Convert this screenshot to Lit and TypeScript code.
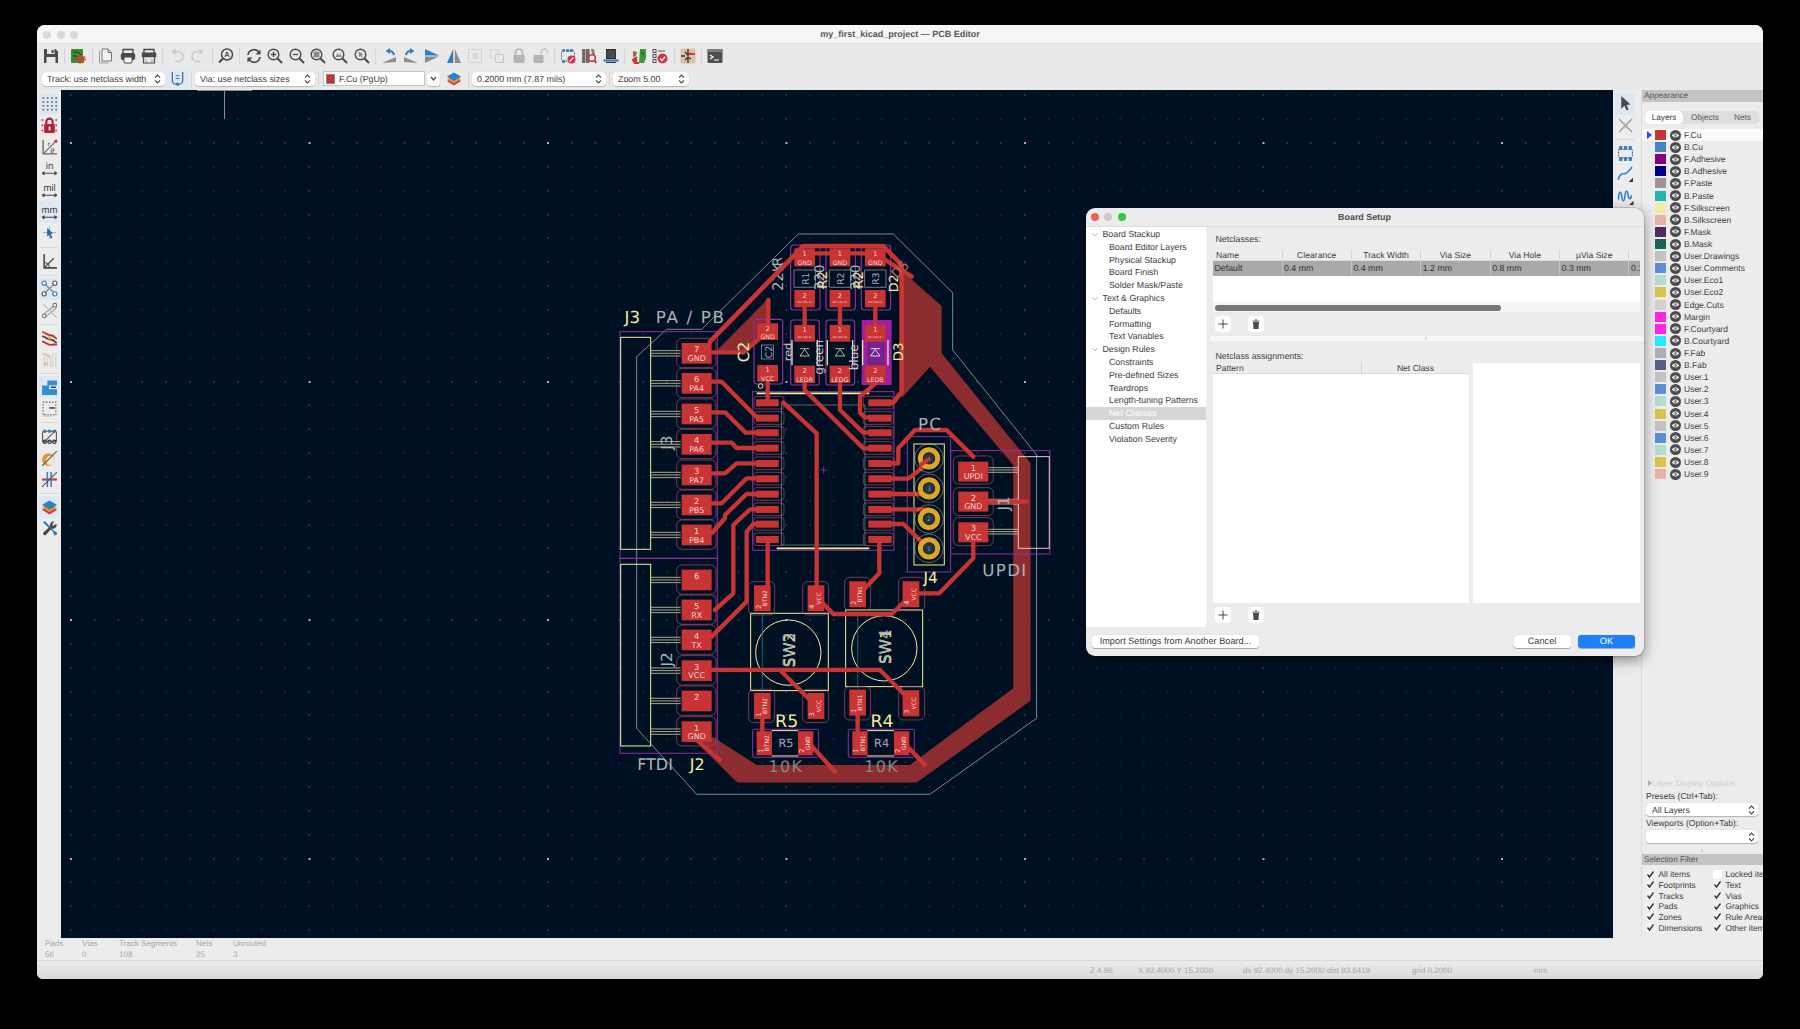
import { css, html, LitElement, svg, nothing, type TemplateResult } from 'lit';
import { customElement } from 'lit/decorators.js';

const INK = '#4a4a4a';
const OFF = '#c9c9c9';
const BLUE = '#2f7fc1';

// 16x16 toolbar glyphs, roughly in KiCad's own colours
const ICONS: Record<string, TemplateResult> = {
  save: svg`<path d="M1 1h11.5L15 3.5V15H1z" fill=${INK}/><rect x="4" y="1" width="7.5" height="5" fill="#e9e9e9"/><rect x="8.6" y="2" width="2" height="3" fill=${INK}/><rect x="3.5" y="9" width="9" height="6" fill="#e9e9e9"/>`,
  setup: svg`<rect x="1" y="1" width="12" height="14" rx="1" fill="#3a8c35"/><path d="M3 4h5l3 3M3 8h3l3 4" stroke="#173f18" fill="none"/><circle cx="11" cy="11" r="2.6" fill="none" stroke="#d6402f" stroke-width="2"/><circle cx="11" cy="11" r="4.2" fill="none" stroke="#d6402f" stroke-width="1.2" stroke-dasharray="1.6 1.7"/>`,
  page: svg`<path d="M1.5 3v12h9" fill="none" stroke="#9a9a9a"/><path d="M4 1h6l3.5 3.5V13H4z" fill="#f2f2f2" stroke="#777"/><path d="M10 1v3.5h3.5" fill="none" stroke="#777"/>`,
  print: svg`<path d="M3 6V1.5h10V6" fill="none" stroke=${INK} stroke-width="1.4"/><rect x="0.8" y="5" width="14.4" height="7" rx="2" fill=${INK}/><rect x="4" y="9" width="8" height="6" rx="1" fill="#f4f4f4" stroke=${INK}/>`,
  plot: svg`<path d="M3 6V1.5h10V6" fill="none" stroke=${INK} stroke-width="1.4"/><rect x="0.8" y="4.5" width="14.4" height="5" fill=${INK}/><path d="M2.5 9.5V15h11V9.5" fill="#e9e9e9" stroke=${INK} stroke-width="1.2"/><path d="M5 11v4M11 11v4" stroke="#999"/>`,
  undo: svg`<path d="M4 3.5h5a4.5 4.5 0 0 1 0 10H6" fill="none" stroke=${OFF} stroke-width="1.6"/><path d="M6.5 1L3.5 3.5 6.5 6" fill="none" stroke=${OFF} stroke-width="1.6"/>`,
  redo: svg`<path d="M12 3.5H7a4.5 4.5 0 0 0 0 10h3" fill="none" stroke=${OFF} stroke-width="1.6"/><path d="M9.5 1l3 2.5-3 2.5" fill="none" stroke=${OFF} stroke-width="1.6"/>`,
  find: svg`<circle cx="9" cy="6.5" r="5.5" fill="none" stroke=${INK} stroke-width="1.5"/><path d="M5 10.5l-4 4" stroke=${INK} stroke-width="2.2"/><text x="9" y="9.2" font-size="7.5" font-weight="700" text-anchor="middle" fill=${INK} font-family="Liberation Sans">A</text>`,
  refresh: svg`<path d="M2 7a6 6 0 0 1 10.5-3.2L14 5.5" fill="none" stroke=${INK} stroke-width="1.7"/><path d="M14.5 1.5v5h-5z" fill=${INK}/><path d="M14 9a6 6 0 0 1-10.5 3.2L2 10.5" fill="none" stroke=${INK} stroke-width="1.7"/><path d="M1.5 14.5v-5h5z" fill=${INK}/>`,
  zin: svg`<circle cx="6.5" cy="6.5" r="5.3" fill="none" stroke=${INK} stroke-width="1.4"/><path d="M10.5 10.5l4.5 4.5" stroke=${INK} stroke-width="2"/><path d="M3.8 6.5h5.4M6.5 3.8v5.4" stroke=${INK} stroke-width="1.3"/>`,
  zout: svg`<circle cx="6.5" cy="6.5" r="5.3" fill="none" stroke=${INK} stroke-width="1.4"/><path d="M10.5 10.5l4.5 4.5" stroke=${INK} stroke-width="2"/><path d="M3.8 6.5h5.4" stroke=${INK} stroke-width="1.3"/>`,
  zfit: svg`<circle cx="6.5" cy="6.5" r="5.3" fill="none" stroke=${INK} stroke-width="1.4"/><path d="M10.5 10.5l4.5 4.5" stroke=${INK} stroke-width="2"/><rect x="3.6" y="3.6" width="5.8" height="5.8" fill="#8a8a8a"/>`,
  zobj: svg`<circle cx="6.5" cy="6.5" r="5.3" fill="none" stroke=${INK} stroke-width="1.4"/><path d="M10.5 10.5l4.5 4.5" stroke=${INK} stroke-width="2"/><path d="M3.5 9l2-4 1.5 2.5L8.5 5l1 4z" fill="#8a8a8a"/>`,
  zsel: svg`<circle cx="6.5" cy="6.5" r="5.3" fill="none" stroke=${INK} stroke-width="1.4"/><path d="M10.5 10.5l4.5 4.5" stroke=${INK} stroke-width="2"/><path d="M4.5 3.5l5 3-2 .8 1 2-1 .5-1-2-1.5 1.2z" fill="#8a8a8a"/>`,
  rccw: svg`<path d="M1 15l14-1V9z" fill="#8c8c8c"/><path d="M13 7a5 5 0 0 0-5-4" fill="none" stroke=${BLUE} stroke-width="2.2"/><path d="M9 0v6L4.5 3z" fill=${BLUE}/>`,
  rcw: svg`<path d="M15 15L1 14V9z" fill="#8c8c8c"/><path d="M3 7a5 5 0 0 1 5-4" fill="none" stroke=${BLUE} stroke-width="2.2"/><path d="M7 0v6l4.5-3z" fill=${BLUE}/>`,
  flip: svg`<path d="M1 8.5h14L1 15z" fill="#8c8c8c"/><path d="M1 1l14 6.5H1z" fill=${BLUE}/>`,
  mirror: svg`<path d="M7.2 1v14H1z" fill=${BLUE}/><path d="M8.8 1v14H15z" fill="#8c8c8c"/>`,
  group: svg`<rect x="1.5" y="1.5" width="13" height="13" fill="none" stroke=${OFF} stroke-dasharray="2 1"/><rect x="5" y="5" width="6" height="6" fill="#d9d9d9"/>`,
  ungroup: svg`<rect x="1.5" y="1.5" width="8" height="8" fill="none" stroke=${OFF} stroke-dasharray="2 1"/><rect x="6.5" y="6.5" width="8" height="8" fill="#e6e6e6" stroke=${OFF}/>`,
  lock: svg`<path d="M4.5 7V4.5a3.5 3.5 0 0 1 7 0V7" fill="none" stroke="#b4b4b4" stroke-width="1.7"/><rect x="2.5" y="7" width="11" height="8" rx="1" fill="#b4b4b4"/>`,
  unlock: svg`<path d="M9.5 7V4a3 3 0 0 1 6 0v1" fill="none" stroke="#c4c4c4" stroke-width="1.4"/><rect x="1.5" y="7" width="10" height="8" rx="1" fill="#b4b4b4"/>`,
  inspect: svg`<rect x="1.5" y="3" width="13" height="10" rx="1.5" fill="none" stroke="#666" stroke-dasharray="2 1"/><path d="M2 2.5h3M6 2.5h3M10 2.5h3M2 13.5h3" stroke=${BLUE} stroke-width="2.4"/><circle cx="11.5" cy="11.5" r="4" fill="#d6304a"/><path d="M9.5 13.5l4-4" stroke="#fff" stroke-width="1.3"/>`,
  lib: svg`<rect x="1" y="1" width="3.5" height="14" fill="#7a6a6a"/><rect x="5" y="1" width="3.5" height="14" fill="#6a6a6a"/><path d="M10 1h3l1 6-2.5 1z" fill="#8a7a7a"/><circle cx="11" cy="10" r="3.3" fill="#fff" stroke="#d6304a" stroke-width="1.6"/><path d="M13.2 12.4l2.2 2.4" stroke="#d6304a" stroke-width="2"/>`,
  view3d: svg`<rect x="3" y="1" width="10" height="10" fill="#2e2e2e"/><path d="M4 2h8v8H4z" fill="#4a4a4a"/><path d="M0.5 12.5h15" stroke=${BLUE} stroke-width="2.2"/><path d="M3 14.5h10" stroke="#333"/>`,
  route: svg`<path d="M9 1h6v9l-2 5H8z" fill="#3a9a3a"/><path d="M10 4l3 3" stroke="#163f16"/><path d="M2 3l4 1-1 4-3 1z" fill="#9a6a4a"/><path d="M6 9l-4 3 2 3h4" fill="none" stroke="#c83434" stroke-width="2"/><circle cx="4" cy="12" r="2.4" fill="#c83434"/>`,
  drc: svg`<rect x="1" y="1.5" width="3" height="3" fill="none" stroke="#555"/><rect x="1" y="6.5" width="3" height="3" fill="none" stroke="#555"/><rect x="1" y="11.5" width="3" height="3" fill="none" stroke="#555"/><path d="M6 3h7" stroke="#555"/><circle cx="10.5" cy="10.5" r="5" fill="#d6304a"/><path d="M8 10.5l2 2 3.2-3.8" fill="none" stroke="#fff" stroke-width="1.5"/>`,
  sch: svg`<rect x="0.5" y="0.5" width="15" height="15" rx="1" fill="#d9c3a8"/><path d="M8 1v5M8 10v5M1 8h4" stroke="#333" stroke-width="1.4"/><path d="M5 4l3 3.5L11 5M5 12l3-3 3 2" fill="none" stroke="#333" stroke-width="1.2"/><path d="M8 6h7" stroke="#c83434" stroke-width="1.8"/>`,
  term: svg`<rect x="0.5" y="1" width="15" height="14" rx="1" fill="#4e4e4e"/><rect x="0.5" y="1" width="15" height="3" fill="#7c7c7c"/><path d="M3 7l3 2-3 2" fill="none" stroke="#fff" stroke-width="1.2"/><path d="M7 12h5" stroke="#fff"/>`,

  grid: svg`<g fill="#6b6f78">${[2, 5.7, 9.4, 13].flatMap((y) => [1.5, 5.5, 9.5, 13.5].map((x) => svg`<rect x=${x} y=${y} width="1.6" height="1.6"/>`))}</g>`,
  gridlock: svg`<g fill="#d6304a"><rect x="0.5" y="2" width="1.6" height="1.6"/><rect x="13.5" y="2" width="1.6" height="1.6"/><rect x="0.5" y="7" width="1.6" height="1.6"/><rect x="13.5" y="7" width="1.6" height="1.6"/><rect x="0.5" y="12" width="1.6" height="1.6"/><rect x="13.5" y="12" width="1.6" height="1.6"/></g><path d="M5 7V4.5a3 3 0 0 1 6 0V7" fill="none" stroke="#b81f3a" stroke-width="2"/><rect x="3" y="6.5" width="10" height="8.5" rx="1" fill="#b81f3a"/><rect x="7.2" y="9" width="1.6" height="3.5" fill="#fff"/>`,
  polar: svg`<path d="M2 1v13h13" fill="none" stroke="#666" stroke-width="1.3"/><path d="M2 14L14 2" stroke="#666"/><circle cx="14" cy="2" r="1.5" fill="#d6304a"/><text x="6" y="6.5" font-size="6.5" font-style="italic" fill="#333" font-family="Liberation Serif">r</text><text x="9" y="13" font-size="7" font-style="italic" fill="#333" font-family="Liberation Serif">θ</text>`,
  uin: svg`<text x="8" y="8.5" font-size="9" text-anchor="middle" fill="#444" font-family="Liberation Sans">in</text><path d="M1 12.5h14M1 12.5l2.5-1.5M1 12.5l2.5 1.5M15 12.5l-2.5-1.5M15 12.5l-2.5 1.5" stroke="#444" fill="none"/>`,
  umil: svg`<text x="8" y="8.5" font-size="9" text-anchor="middle" fill="#444" font-family="Liberation Sans">mil</text><path d="M1 12.5h14M1 12.5l2.5-1.5M1 12.5l2.5 1.5M15 12.5l-2.5-1.5M15 12.5l-2.5 1.5" stroke="#444" fill="none"/>`,
  umm: svg`<text x="8" y="8.5" font-size="9" text-anchor="middle" fill="#444" font-family="Liberation Sans">mm</text><path d="M1 12.5h14M1 12.5l2.5-1.5M1 12.5l2.5 1.5M15 12.5l-2.5-1.5M15 12.5l-2.5 1.5" stroke="#444" fill="none"/>`,
  fullcross: svg`<path d="M8 1v12M2 7h12" stroke="#8fb7d2"/><path d="M6 3l5 5-2 .5 1.8 3.5-1.5.8L7.5 9 6 10.5z" fill="#3a5a86"/><path d="M6 3l5 5-2 .5-3 2z" fill="#1d70b8"/>`,
  axes: svg`<path d="M3 1v13h12" fill="none" stroke=${INK} stroke-width="1.5"/><path d="M3 14l9-9" stroke=${INK} stroke-width="1.3"/><path d="M3 9a5 5 0 0 1 5 5" fill="none" stroke=${INK}/>`,
  rats: svg`<path d="M2.5 3l11 10M13.5 3l-11 10" stroke="#8b8b8b" stroke-width="1.2"/><circle cx="3" cy="3" r="2" fill="#fff" stroke="#3a7ca8"/><circle cx="13" cy="3" r="2" fill="#fff" stroke="#555"/><circle cx="3" cy="13" r="2" fill="#fff" stroke="#555"/><circle cx="13" cy="13" r="2" fill="#fff" stroke="#3a7ca8"/>`,
  ratsc: svg`<path d="M2 14C3 8 9 9 13 2" fill="none" stroke="#999" stroke-width="1.2"/><path d="M4 15C7 9 12 11 15 4" fill="none" stroke="#999"/><circle cx="3" cy="13" r="1.7" fill="#fff" stroke="#777"/><circle cx="13" cy="3" r="1.7" fill="#fff" stroke="#777"/><path d="M2 2l13 13" stroke="#bbb"/>`,
  tracks: svg`<path d="M1 2c4 0 4 3 8 3s4 3 6 3" fill="none" stroke="#c2342f" stroke-width="1.8"/><path d="M1 6c4 0 4 3 8 3s4 3 6 3" fill="none" stroke="#5a3d35" stroke-width="1.6"/><path d="M1 11c4 0 4 3 8 3s4-1 6 0" fill="none" stroke="#c2342f" stroke-width="1.8"/><circle cx="8" cy="7.5" r="1.6" fill="#e2a93a"/>`,
  gold: svg`<path d="M3 15V7a3 3 0 0 1 6 0v8M6 15V6M11 15V2M14 15V2" fill="none" stroke="#d4d4d4" stroke-width="1.3"/><path d="M1 3c3-1 5 0 7 3" fill="none" stroke="#e3b977" stroke-width="1.3"/><circle cx="4" cy="12" r="1.2" fill="#e2a93a"/>`,
  fill: svg`<path d="M1 15V6h5V1.5h9V15z" fill="#2f8fd0"/><rect x="7.5" y="6" width="7.5" height="3.5" fill="#e9f0f6"/><path d="M9 7.7h5" stroke="#333" stroke-width="1.4"/>`,
  outline: svg`<rect x="2" y="2" width="12" height="12" fill="none" stroke="#666" stroke-dasharray="1.4 1.4"/><path d="M8 7.5h5" stroke="#333" stroke-width="1.4"/><path d="M2 15h8" stroke="#e3b977" stroke-width="1.2"/>`,
  vias: svg`<rect x="1.5" y="3" width="13" height="10" rx="1" fill="none" stroke="#555"/><g fill=${BLUE}><circle cx="3.5" cy="3" r="1.6"/><circle cx="8" cy="3" r="1.6"/><circle cx="12.5" cy="3" r="1.6"/></g><path d="M2 14L14 2" stroke="#555"/><g fill="none" stroke="#333"><circle cx="3.5" cy="13" r="1.6"/><circle cx="8" cy="13" r="1.6"/><circle cx="12.5" cy="13" r="1.6"/></g>`,
  orange: svg`<circle cx="7" cy="9" r="6" fill="#e8962c"/><circle cx="9" cy="10" r="4" fill="#e9e9e9" stroke="#ddd"/><path d="M1 15L15 1" stroke="#555"/>`,
  redblue: svg`<path d="M1 8h14" stroke="#d6304a" stroke-width="2"/><path d="M6 1v14M9.5 1v14" stroke="#2f7fc1" stroke-width="1.4"/><path d="M1 15L15 1" stroke="#555"/>`,
  layers: svg`<path d="M8 6l7 4-7 4.5L1 10z" fill="#d6304a"/><path d="M8 4l7 4-7 4.5L1 8z" fill="#e39a2e"/><path d="M8 1.5l7 4L8 10 1 5.5z" fill="#2f7fc1"/>`,
  tools: svg`<path d="M2 2l1.5-1 9 9.5 1.8.5 1 2.5-2.5 1-1-2-.3-1.2z" fill="#1d70b8"/><path d="M14.5 3.5l-3 2-1-1 2-3a3.5 3.5 0 0 0-4 4.5L2 12a2 2 0 0 0 2 2.5L10 8a3.5 3.5 0 0 0 4.5-4.5z" fill=${INK}/>`,

  arrow: svg`<path d="M4 1v12l3-2.8 2 4.4 2-.9-2-4.3 3.8-.4z" fill="#4a4a4a"/>`,
  cross: svg`<path d="M2 2l12 12M14 2L2 14" stroke="#8c8c8c" stroke-width="1.1"/><path d="M6 6l4 4M10 6l-4 4" stroke="#bbb" stroke-width="3" opacity=".5"/>`,
  fp: svg`<rect x="1.5" y="4" width="13" height="8" rx="1.5" fill="none" stroke="#555" stroke-dasharray="1.6 1"/><g fill=${BLUE}><rect x="2" y="1" width="3" height="3.5"/><rect x="6.5" y="1" width="3" height="3.5"/><rect x="11" y="1" width="3" height="3.5"/><rect x="2" y="11.5" width="3" height="3.5"/><rect x="6.5" y="11.5" width="3" height="3.5"/><rect x="11" y="11.5" width="3" height="3.5"/></g>`,
  wire: svg`<path d="M1 13c2-7 4-5 7-6s4-3 6-6" fill="none" stroke=${BLUE} stroke-width="1.5"/><path d="M15 15v-4l-4 4z" fill="#333"/>`,
  wave: svg`<path d="M1 11c1 0 0-7 2-7s1 8 3 8 1-9 3-9 1 7 3 7 1-3 2-3" fill="none" stroke=${BLUE} stroke-width="1.5"/><path d="M15.5 16v-4l-4 4z" fill="#333"/>`,
};

const TOP = 'save|setup|page print plot|undo redo|find|refresh zin zout zfit zobj zsel|rccw rcw flip mirror group ungroup lock unlock|inspect lib view3d|route drc|sch|term';
const LEFT = 'grid* gridlock polar uin umil umm* fullcross|axes|rats* ratsc|tracks gold|fill* outline|vias orange redblue|layers* tools';
const RIGHT = 'arrow* cross|fp wire wave';

function toolStrip(spec: string) {
  return spec.split('|').map((chunk, i) => html`
    ${i ? html`<i class="sep"></i>` : nothing}
    ${chunk.split(' ').map((raw) => {
      const name = raw.replace('*', '');
      return html`<span class="tool ${raw.endsWith('*') ? 'on' : ''}"><svg viewBox="0 0 16 16">${ICONS[name]}</svg></span>`;
    })}
  `);
}

const updown = html`<svg class="updown" viewBox="0 0 7 10"><path d="M1 3.6L3.5 1 6 3.6M1 6.4L3.5 9 6 6.4" fill="none" stroke="#444" stroke-width="1.1"/></svg>`;

const chromeStyles = css`
  .tool { flex: none; display: flex; align-items: center; justify-content: center; border-radius: 2px; }
  .tool.on { background: #dde8f2; }
  .tool svg { width: 16px; height: 16px; display: block; }
  .updown { width: 7px; height: 10px; flex: none; }
`;

const LAYERS: [string, string, boolean?][] = [
  ['F.Cu', '#c83434'], ['B.Cu', '#4d7fc4'], ['F.Adhesive', '#84007f'], ['B.Adhesive', '#00008a'],
  ['F.Paste', '#a39494'], ['B.Paste', '#21b5ac'], ['F.Silkscreen', '#f2eda1'], ['B.Silkscreen', '#e8b2a7'],
  ['F.Mask', '#5a2d6e', true], ['B.Mask', '#1a6f62', true], ['User.Drawings', '#c2c2c2'], ['User.Comments', '#5b8fd9'],
  ['User.Eco1', '#b4dbd2'], ['User.Eco2', '#d6c54c'], ['Edge.Cuts', '#d0d2cb'], ['Margin', '#ff26e2'],
  ['F.Courtyard', '#ff26e2'], ['B.Courtyard', '#26e9ff'], ['F.Fab', '#afafaf'], ['B.Fab', '#585d84'],
  ['User.1', '#c2c2c2'], ['User.2', '#5b8fd9'], ['User.3', '#b4dbd2'], ['User.4', '#d6c54c'],
  ['User.5', '#c2c2c2'], ['User.6', '#5b8fd9'], ['User.7', '#b4dbd2'], ['User.8', '#dcc24a'], ['User.9', '#e8b2a7'],
];

const FILTERS: [string, boolean][] = [
  ['All items', true], ['Locked items', false], ['Footprints', true], ['Text', true], ['Tracks', true], ['Vias', true],
  ['Pads', true], ['Graphics', true], ['Zones', true], ['Rule Areas', true], ['Dimensions', true], ['Other items', true],
];

@customElement('appearance-panel')
export class AppearancePanel extends LitElement {
  static override styles = [chromeStyles, css`
    :host { display: flex; flex-direction: column; width: 122px; flex: none; background: #ececec; overflow: hidden;
      font: 8.6px "Liberation Sans", sans-serif; color: #3c3c3c; border-left: 1px solid #dcdcdc; box-sizing: border-box; }
    .head { height: 12px; line-height: 12px; background: #c4c4c4; font-size: 8.2px; padding-left: 2px; color: #555; flex: none; }
    .filt { height: 11px; line-height: 11px; }
    .tabs { display: flex; margin: 9px 3px 5px 3px; height: 13px; background: #dedede; border-radius: 5px; align-items: center; color: #555; flex: none; }
    .tabs span { text-align: center; font-size: 8.2px; line-height: 13px; }
    .tabs .active { width: 38px; background: #fff; border-radius: 5px; color: #333; }
    .tabs .obj { width: 44px; }
    .tabs .net { flex: 1; padding-right: 2px; }
    .layers { flex: 1; min-height: 0; }
    .row { height: 12.12px; display: flex; align-items: center; padding-left: 13px; position: relative; white-space: nowrap; font-size: 8.5px; }
    .row.cur { background: #fafafa; }
    .row.cur::before { content: ''; position: absolute; left: 5px; top: 2px; border-left: 5px solid #3c3cf0; border-top: 4px solid transparent; border-bottom: 4px solid transparent; }
    .swatch { width: 11px; height: 10px; flex: none; }
    .swatch.mask { background-image: repeating-conic-gradient(rgba(0,0,0,.22) 0 25%, transparent 0 50%); background-size: 4px 4px; }
    .eye { width: 11px; height: 11px; margin: 0 3px 0 4px; flex: none; display: block; }
    .disp { font-size: 8.5px; color: #cfcfcf; padding-left: 10px; height: 12px; line-height: 12px; position: relative; flex: none; }
    .disp::before { content: ''; position: absolute; left: 6px; top: 3px; border-left: 4px solid #aaa; border-top: 3px solid transparent; border-bottom: 3px solid transparent; }
    .lbl { padding-left: 4px; height: 14px; line-height: 14px; flex: none; }
    .sel { margin: 0 5px 0 4px; height: 13px; background: #fff; border-radius: 4px; display: flex; align-items: center; justify-content: space-between; padding: 0 3px 0 6px; box-shadow: 0 .5px 1px rgba(0,0,0,.25); flex: none; }
    .sash { height: 11px; flex: none; position: relative; }
    .sash::after { content: ''; position: absolute; left: 59px; top: 6px; width: 2px; height: 3px; background: #d2d2d2; }
    .filters { display: grid; grid-template-columns: 67px 67px; grid-auto-rows: 10.7px; padding: 3.6px 0 5px 4px; flex: none; }
    .f { display: flex; align-items: center; white-space: nowrap; font-size: 8.4px; }
    .box { width: 9px; height: 9px; background: #f4f4f4; border-radius: 2px; margin-right: 3.5px; flex: none; display: block; }
    .box.empty { background: #fff; }
  `];

  override render() {
    return html`
      <div class="head">Appearance</div>
      <div class="tabs"><span class="active">Layers</span><span class="obj">Objects</span><span class="net">Nets</span></div>
      <div class="layers">
        ${LAYERS.map(([name, color, mask], i) => html`
          <div class="row ${i === 0 ? 'cur' : ''}">
            <span class="swatch ${mask ? 'mask' : ''}" style="background-color:${color}"></span>
            <svg class="eye" viewBox="0 0 11 11"><circle cx="5.5" cy="5.5" r="5.5" fill="#4c4c4c"/><path d="M1.8 5.5c2-2.6 5.4-2.6 7.4 0-2 2.6-5.4 2.6-7.4 0z" fill="#eee"/><circle cx="5.5" cy="5.5" r="1.4" fill="#888"/></svg>
            ${name}
          </div>`)}
      </div>
      <div class="disp">Layer Display Options</div>
      <div class="lbl">Presets (Ctrl+Tab):</div>
      <div class="sel">All Layers ${updown}</div>
      <div class="lbl">Viewports (Option+Tab):</div>
      <div class="sel">&nbsp;${updown}</div>
      <div class="sash"></div>
      <div class="head filt">Selection Filter</div>
      <div class="filters">
        ${FILTERS.map(([name, on]) => html`
          <div class="f">
            <svg class="box ${on ? '' : 'empty'}" viewBox="0 0 9 9">${on ? svg`<path d="M1.5 4.5l2 2.5 4-5.5" fill="none" stroke="#333" stroke-width="1.4"/>` : nothing}</svg>
            ${name}
          </div>`)}
      </div>
    `;
  }
}

const TREE: [string, number, boolean?][] = [
  ['Board Stackup', 0], ['Board Editor Layers', 1], ['Physical Stackup', 1], ['Board Finish', 1], ['Solder Mask/Paste', 1],
  ['Text & Graphics', 0], ['Defaults', 1], ['Formatting', 1], ['Text Variables', 1],
  ['Design Rules', 0], ['Constraints', 1], ['Pre-defined Sizes', 1], ['Teardrops', 1], ['Length-tuning Patterns', 1],
  ['Net Classes', 1, true], ['Custom Rules', 1], ['Violation Severity', 1],
];
const COLS = ['Name', 'Clearance', 'Track Width', 'Via Size', 'Via Hole', 'µVia Size', ''];
const CELLS = ['Default', '0.4 mm', '0.4 mm', '1.2 mm', '0.8 mm', '0.3 mm', '0.1 mm'];

const addDel = html`
  <div class="btns">
    <span class="sq"><svg viewBox="0 0 10 10"><path d="M5 .5v9M.5 5h9" stroke="#444" stroke-width="1"/></svg></span>
    <span class="sq"><svg viewBox="0 0 10 10"><path d="M2 3h6l-.5 7h-5zM1.2 1.8h7.6v.8H1.2zM3.8.6h2.4v1H3.8z" fill="#4c4c4c"/></svg></span>
  </div>`;

@customElement('board-setup')
export class BoardSetup extends LitElement {
  static override styles = css`
    :host { position: absolute; left: 1048.5px; top: 183px; width: 558px; height: 448px; display: flex; flex-direction: column;
      background: #ececec; border-radius: 9px; overflow: hidden; box-shadow: 0 4px 14px rgba(0,0,0,.45), 0 0 0 .5px rgba(0,0,0,.25);
      font: 8.8px "Liberation Sans", sans-serif; color: #3c3c3c; }
    .title { height: 19px; flex: none; display: flex; align-items: center; justify-content: center; font-weight: 700; font-size: 8.9px; color: #4c4c4c; position: relative; border-bottom: 1px solid #dcdcdc; box-sizing: border-box; }
    .dots { position: absolute; left: 5px; top: 5px; display: flex; gap: 5.5px; }
    .dots i { width: 8px; height: 8px; border-radius: 50%; }
    .body { flex: 1; display: flex; min-height: 0; }
    .tree { width: 120.5px; background: #fff; flex: none; padding-top: 1px; }
    .node { height: 12.8px; line-height: 12.8px; padding-left: 17px; position: relative; white-space: nowrap; }
    .node.kid { padding-left: 23.5px; }
    .node.cur { background: #d6d6d6; color: #fff; }
    .node svg { position: absolute; left: 6px; top: 4px; width: 6px; height: 5px; }
    .pane { flex: 1; min-width: 0; padding-left: 7px; display: flex; flex-direction: column; }
    .cap { height: 23px; line-height: 24px; padding-left: 3px; flex: none; margin-left: -0.5px; }
    .wrap { margin-right: 3.5px; }
    .grid { display: grid; grid-template-columns: 69.5px repeat(5, 69.4px) 1fr; background: #fff; overflow: hidden; }
    .grid span { white-space: nowrap; overflow: hidden; }
    .hd { height: 11px; line-height: 11px; text-align: center; border-right: 1px solid #d4d4d4; border-bottom: 1px solid #dcdcdc; background: #ededed; box-sizing: border-box; font-size: 8.6px; }
    .hd.first { text-align: left; padding-left: 3px; }
    .hd.last { border-right: 0; }
    .cell { height: 15px; line-height: 15px; background: #a9a9a9; color: #333; padding-left: 1.5px; border-right: 1px solid #c2c2c2; box-sizing: border-box; }
    .cell.last { border-right: 0; }
    .blank { height: 26px; background: #fff; }
    .scroll { height: 10px; background: #f5f5f5; position: relative; flex: none; }
    .thumb { position: absolute; left: 2px; top: 3px; width: 286px; height: 6px; background: #777; border-radius: 3px; }
    .btns { display: flex; gap: 17px; height: 24px; align-items: center; padding-left: 2px; flex: none; }
    .sq { width: 16px; height: 16px; background: #fff; border-radius: 4px; display: flex; align-items: center; justify-content: center; }
    .sq svg { width: 10px; height: 10px; }
    .strip { height: 5px; background: #f8f8f8; flex: none; position: relative; margin-left: -3.5px; }
    .strip::after { content: ''; position: absolute; left: 215px; top: 1px; width: 2px; height: 3px; background: #dcdcdc; }
    .cap2 { height: 22px; line-height: 30px; padding-left: 2.5px; flex: none; }
    .lower { flex: 1; display: flex; gap: 4px; margin-right: 3.5px; min-height: 0; }
    .assign { width: 256px; background: #fff; display: flex; flex-direction: column; }
    .assign .heads { display: grid; grid-template-columns: 149px 1fr; }
    .side { flex: 1; background: #fff; }
    .foot { height: 29px; flex: none; display: flex; align-items: center; padding: 0 8.5px 0 6.5px; gap: 7.5px; }
    .btn { height: 13px; line-height: 13px; background: #fff; border-radius: 3.5px; box-shadow: 0 .5px 1px rgba(0,0,0,.3); text-align: center; font-size: 9.2px; white-space: nowrap; }
    .imp { width: 167px; margin-right: auto; }
    .act { width: 57px; }
    .ok { background: #1f80f5; color: #fff; }
  `;

  override render() {
    return html`
      <div class="title">
        <div class="dots"><i style="background:#ee5f57"></i><i style="background:#c8c8c8"></i><i style="background:#35c748"></i></div>
        Board Setup
      </div>
      <div class="body">
        <div class="tree">
          ${TREE.map(([t, depth, cur]) => html`
            <div class="node ${depth ? 'kid' : ''} ${cur ? 'cur' : ''}">
              ${depth ? nothing : html`<svg viewBox="0 0 6 5"><path d="M.5 1L3 4l2.5-3" fill="none" stroke="#bbb"/></svg>`}${t}
            </div>`)}
        </div>
        <div class="pane">
          <div class="cap">Netclasses:</div>
          <div class="wrap">
            <div class="grid">
              ${COLS.map((c, i) => html`<span class="hd ${i === 0 ? 'first' : ''} ${i === 6 ? 'last' : ''}">${c}</span>`)}
              ${CELLS.map((c, i) => html`<span class="cell ${i === 6 ? 'last' : ''}">${c}</span>`)}
            </div>
            <div class="blank"></div>
            <div class="scroll"><div class="thumb"></div></div>
          </div>
          ${addDel}
          <div class="strip"></div>
          <div class="cap2">Netclass assignments:</div>
          <div class="lower">
            <div class="assign">
              <div class="heads"><span class="hd first">Pattern</span><span class="hd last">Net Class</span></div>
            </div>
            <div class="side"></div>
          </div>
          ${addDel}
        </div>
      </div>
      <div class="foot">
        <span class="btn imp">Import Settings from Another Board...</span>
        <span class="btn act">Cancel</span>
        <span class="btn act ok">OK</span>
      </div>
    `;
  }
}

// dotted grid: one path per brightness so we don't emit thousands of nodes
const STEP = 23.85;
function dots() {
  let minor = '';
  let row = '';
  let major = '';
  for (let i = 0; 70 + i * STEP < 1620; i++) {
    for (let j = -3; 143 + j * STEP < 945; j++) {
      const x = (70 + i * STEP).toFixed(1);
      const y = Math.round(143 + j * STEP);
      const onRow = ((j % 10) + 10) % 10 === 0;
      const onCol = i % 10 === 0;
      const seg = `M${x} ${y}h1.4`;
      if (onRow && onCol) major += `M${x} ${y}h2`;
      else if (onRow || onCol) row += seg;
      else minor += seg;
    }
  }
  return { minor, row, major };
}
const GRID = dots();

// everything below is in 3x units around (600,220), same scale as the close-up crops
const CU = '#c83434';
const track = (pts: string, w = 13) => svg`<polyline points=${pts} fill="none" stroke=${CU} stroke-width=${w} stroke-linejoin="round" stroke-linecap="round"/>`;
const box = (x: number, y: number, w: number, h: number, c: string, sw = 3, rx = 0) => svg`<rect x=${x} y=${y} width=${w} height=${h} rx=${rx} fill="none" stroke=${c} stroke-width=${sw}/>`;
const label = (x: number, y: number, t: string, size: number, c: string, rot = 0, gap = 0) => svg`<text x=${x} y=${y} font-size=${size} letter-spacing=${gap} fill=${c} text-anchor="middle" transform=${rot ? `rotate(${rot} ${x} ${y})` : ''}>${t}</text>`;

const SILK = '#f2eda1';
const GREY = '#a8b4b6';
const COURT = '#8f2fa0';
const CRT2 = '#a8506a';

const pad = (cx: number, cy: number, w: number, h: number, a: string, b: string, size = 25, tiny = false) => svg`
  <rect x=${cx - w / 2} y=${cy - h / 2} width=${w} height=${h} fill=${CU}/>
  ${label(cx, cy - 3, a, size, '#f2d8d4')}
  ${label(cx, cy + (tiny ? 14 : 23), b, tiny ? 8 : size - 1, '#f2d8d4')}
`;
const vpad = (cx: number, cy: number, w: number, h: number, a: string, b: string) => svg`
  <rect x=${cx - w / 2} y=${cy - h / 2} width=${w} height=${h} fill=${CU}/>
  ${label(cx - 5, cy + h / 2 - 14, a, 20, '#f2d8d4', -90)}
  ${label(cx + 14, cy, b, 18, '#f2d8d4', -90)}
`;

function connector(top: number, bottom: number, rows: number[], xa = 62, xb = 152) {
  return svg`
    ${box(xa, top, xb - xa, bottom - top, SILK, 3)}
    ${rows.map((y) => svg`
      <path d="M${xb} ${y - 8}h90M${xb} ${y}h90M${xb} ${y + 8}h90" stroke="#d6d3a8" stroke-width="2.4" fill="none"/>
      ${box(230, y - 45, 118, 88, CRT2, 2, 16)}`)}
  `;
}

const J3 = [400, 490, 582, 673, 765, 855, 945];
const J2 = [1080, 1170, 1260, 1352, 1443, 1535];
const IC_Y = [548, 594, 638, 684, 730, 776, 822, 868, 912, 958];

const board = svg`
  <!-- hatched GND pour -->
  <path fill="url(#hatch)" d="M880 130L1025 258V400L1292 730V1442L950 1688H412L290 1568L340 1552L470 1635H930L1240 1405V735L990 440L905 535V170Z"/>
  <path fill="url(#hatch)" d="M350 392L505 235V340L430 392Z"/>

  <!-- board edge -->
  <path d="M595 42H880L1058 218V390L1310 705V1495L990 1723H290L110 1525V410L200 328H305Z" fill="none" stroke="#93a7ab" stroke-width="2.4"/>

  <!-- connectors -->
  ${box(60, 335, 292, 680, COURT, 3)}
  ${box(60, 1015, 292, 585, COURT, 3)}
  ${connector(352, 988, J3)}
  ${connector(1033, 1578, J2)}

  <!-- J1 -->
  ${box(1052, 692, 298, 310, COURT, 3)}
  ${box(1255, 710, 93, 275, '#e8c8b8', 3)}
  ${[750, 845, 935].map((y) => svg`
    ${box(1060, y - 42, 120, 84, CRT2, 2, 16)}
    <path d="M1165 ${y - 7}h90M1165 ${y}h90M1165 ${y + 7}h90" stroke="#d6d3a8" stroke-width="2.4" fill="none"/>`)}

  <!-- part courtyards -->
  ${[572, 678, 784].map((x) => box(x, 75, 88, 195, COURT, 3.5, 8))}
  ${[572, 678].map((x) => box(x, 300, 86, 195, COURT, 3.5, 8))}
  ${box(462, 298, 86, 194, COURT, 3.5, 8)}
  <rect x="785" y="300" width="90" height="195" fill="#a01fa0"/>
  <rect x="802" y="362" width="52" height="74" fill="#74228c"/>
  <path d="M582 150h64v52h-64zM688 150h64v52h-64zM794 150h64v52h-64z" fill="none" stroke="#b8a8b0" stroke-width="2"/>
  ${[[614, '#e2dfa8'], [720, '#e2dfa8'], [826, '#ffffff']].map(([x, c]) => svg`
    <path d="M${Number(x) - 38} 360v76M${Number(x) + 38} 360v76" stroke="#e6e3b4" stroke-width="4"/>
    <path d="M${Number(x) - 14} 408h28l-14-20zM${Number(x) - 14} 386h28" fill="none" stroke=${c as string} stroke-width="2.4"/>`)}
  ${box(485, 375, 36, 42, '#9ba6c0', 2)}

  <!-- IC -->
  ${box(458, 515, 424, 476, COURT, 3)}
  ${box(545, 555, 250, 420, '#7d8a8c', 2)}
  <path d="M470 520H808M530 985H808" stroke=${SILK} stroke-width="5"/>
  ${IC_Y.map((y) => svg`${box(462, y - 19, 90, 38, CRT2, 2, 8)}${box(790, y - 19, 90, 38, CRT2, 2, 8)}`)}
  <path d="M660 750h22M671 739v22" stroke="#a040b8" stroke-width="2"/>

  <!-- J4 -->
  ${box(922, 650, 130, 406, COURT, 3)}
  ${box(942, 672, 91, 363, SILK, 3)}

  <!-- switches -->
  ${box(452, 1180, 233, 232, SILK, 3)}
  <circle cx="565" cy="1298" r="98" fill="none" stroke=${SILK} stroke-width="3"/>
  ${box(737, 1170, 231, 230, SILK, 3)}
  <circle cx="853" cy="1285" r="98" fill="none" stroke=${SILK} stroke-width="3"/>
  <path d="M487 1180v235M773 1170v235" stroke="#1e8a96" stroke-width="2"/>
  ${[[446, 1085], [608, 1085], [446, 1408], [608, 1408], [734, 1072], [896, 1072], [734, 1400], [896, 1400]].map(([x, y]) => box(x, y, 78, 100, CRT2, 2, 14))}
  ${box(458, 1528, 198, 84, COURT, 3, 4)}
  ${box(745, 1528, 198, 84, COURT, 3, 4)}
  <path d="M515 1532h80M515 1608h80M802 1532h80M802 1608h80" stroke=${SILK} stroke-width="3"/>

  <!-- silk that the copper is drawn over -->
  <g stroke="none">
    ${label(548, 170, '22K', 44, GREY, -90)}
    ${label(545, 125, 'R', 40, GREY, -90)}
    ${label(672, 172, '220', 40, GREY, -90)}
    ${label(780, 172, '220', 40, GREY, -90)}
  </g>

  <!-- tracks -->
  ${track('330,365 610,78 850,78 905,135 905,515 880,548 830,548', 14)}
  ${track('615,100 825,100 935,170')}
  ${track('505,335 505,240')}
  ${track('503,335 430,397 330,397')}
  ${[614, 720, 826].map((x) => track(`${x},240 ${x},330`))}
  ${track('614,460 614,510 790,685 830,685')}
  ${track('720,460 720,570 790,638 830,638')}
  ${track('826,460 826,490 780,530 780,578 795,592 830,592')}
  ${track('503,470 503,548')}
  ${track('550,548 650,640 650,1130')}
  ${track('335,485 365,485 470,592 510,592')}
  ${track('335,577 375,577 437,638 510,638')}
  ${track('335,668 395,668 410,684 510,684')}
  ${track('335,760 375,760 410,730 510,730')}
  ${track('335,850 365,850 440,775 510,775')}
  ${track('335,940 375,895 375,885 440,822 510,822')}
  ${track('510,868 450,868 400,915 400,1120 345,1170')}
  ${track('510,912 460,912 440,935 440,1145 335,1250')}
  ${track('503,958 503,1110')}
  ${track('838,958 838,1060 790,1110')}
  ${track('875,730 895,730 895,685 945,630 1040,630 1120,710')}
  ${track('875,776 925,776 985,730')}
  ${track('875,822 985,822')}
  ${track('875,868 985,868')}
  ${track('875,912 910,912 985,985')}
  ${track('1120,950 1120,1015 1018,1120 940,1120 875,1182 700,1182 650,1130')}
  ${track('290,1350 840,1350 945,1455')}
  ${track('540,1350 645,1455')}
  ${track('1120,845 1280,845')}
  ${track('487,1460 487,1560')}
  ${track('773,1460 773,1560')}
  ${track('632,1575 705,1655')}
  ${track('918,1575 975,1635')}
  ${track('290,1560 360,1620', 12)}

  <!-- pads -->
  ${['7|GND', '6|PA4', '5|PA5', '4|PA6', '3|PA7', '2|PB5', '1|PB4'].map((s, i) => { const [a, b] = s.split('|'); return pad(290, J3[i], 90, 62, a, b); })}
  ${['6|', '5|RX', '4|TX', '3|VCC', '2|', '1|GND'].map((s, i) => { const [a, b] = s.split('|'); return pad(290, J2[i], 90, 62, a, b); })}
  ${pad(1120, 755, 90, 60, '1', 'UPDI')}${pad(1120, 845, 90, 60, '2', 'GND')}${pad(1120, 937, 90, 60, '3', 'VCC')}
  ${[[614, 'GND'], [720, 'GND'], [826, 'GND']].map(([x, n]) => pad(x as number, 112, 62, 54, '1', n as string, 20))}
  ${[[614, 'Net-(D1-A)'], [720, 'Net-(D2-A)'], [826, 'Net-(D3-A)']].map(([x, n]) => pad(x as number, 236, 62, 52, '2', n as string, 20, true))}
  ${[[614, 'Net-(D1-A)'], [720, 'Net-(D2-A)'], [826, 'Net-(D3-A)']].map(([x, n]) => pad(x as number, 340, 62, 50, '1', n as string, 20, true))}
  ${[[614, 'LEDR'], [720, 'LEDG'], [826, 'LEDB']].map(([x, n]) => pad(x as number, 463, 62, 52, '2', n as string, 20))}
  ${pad(503, 335, 62, 50, '2', 'GND', 20)}${pad(503, 460, 62, 50, '1', 'VCC', 20)}
  ${IC_Y.map((y) => svg`<rect x="468" y=${y - 10} width="68" height="21" fill=${CU}/><rect x="805" y=${y - 10} width="70" height="21" fill=${CU}/>`)}
  ${vpad(487, 1135, 50, 78, '2', 'BTN2')}${vpad(648, 1135, 50, 78, '4', 'VCC')}
  ${vpad(487, 1458, 50, 78, '1', 'BTN2')}${vpad(648, 1458, 50, 78, '3', 'VCC')}
  ${vpad(773, 1123, 50, 78, '2', 'BTN1')}${vpad(933, 1123, 50, 78, '4', 'VCC')}
  ${vpad(773, 1448, 50, 78, '1', 'BTN1')}${vpad(933, 1450, 50, 78, '3', 'VCC')}
  ${vpad(493, 1570, 46, 72, '1', 'BTN2')}${vpad(617, 1570, 46, 72, '2', 'GND')}
  ${vpad(780, 1570, 46, 72, '1', 'BTN1')}${vpad(905, 1570, 46, 72, '2', 'GND')}

  <!-- through-hole pins of J4 -->
  ${[['4', 715], ['3', 805], ['2', 897], ['1', 985]].map(([n, y]) => svg`
    <circle cx="987" cy=${y} r="43" fill="none" stroke=${SILK} stroke-width="1.6" opacity=".75"/>
    <circle cx="987" cy=${y} r="26" fill="none" stroke="#dca722" stroke-width="15"/>
    <circle cx="987" cy=${y} r="17" fill="#23333f"/>
    ${label(987, (y as number) + 7, n as string, 18, '#8c9aa0')}`)}
  ${track('962,735 985,718', 12)}

  <!-- silk and fab text -->
  <circle cx="482" cy="498" r="7" fill="none" stroke=${SILK} stroke-width="3"/>
  <g stroke="none">
    ${label(97, 308, 'J3', 50, SILK)}
    ${label(272, 308, 'PA / PB', 50, GREY, 0, 5)}
    ${label(448, 396, 'C2', 46, SILK, -90)}
    ${label(215, 668, 'J3', 46, GREY, -90)}
    ${label(990, 630, 'PC', 50, GREY, 0, 3)}
    ${label(1228, 850, 'J1', 46, GREY, -90)}
    ${label(1215, 1068, 'UPDI', 50, GREY, 0, 4)}
    ${label(992, 1088, 'J4', 46, SILK)}
    ${label(215, 1318, 'J2', 46, GREY, -90)}
    ${label(165, 1650, 'FTDI', 48, GREY)}
    ${label(292, 1650, 'J2', 48, SILK)}
    ${label(560, 1522, 'R5', 52, SILK)}
    ${label(846, 1522, 'R4', 52, SILK)}
    ${label(558, 1655, '10K', 48, '#80898c', 0, 4)}
    ${label(845, 1655, '10K', 48, '#80898c', 0, 4)}
    ${label(558, 1582, 'R5', 34, '#a6a6c6')}
    ${label(845, 1582, 'R4', 34, '#a6a6c6')}
    ${label(586, 1290, 'SW2', 46, SILK, -90)}
    ${label(581, 1290, 'SW3', 46, GREY, -90)}
    ${label(874, 1280, 'SW1', 46, SILK, -90)}
    ${label(869, 1280, 'SW4', 46, GREY, -90)}
    ${label(680, 180, 'R2', 40, SILK, -90)}
    ${label(790, 180, 'R2', 40, SILK, -90)}
    ${label(626, 176, 'R1', 28, '#a6a6c6', -90)}
    ${label(732, 176, 'R2', 28, '#a6a6c6', -90)}
    ${label(838, 176, 'R3', 28, '#a6a6c6', -90)}
    ${label(515, 396, 'C2', 28, '#a6a6c6', -90)}
    ${label(575, 396, 'red', 34, '#c8c8c0', -90)}
    ${label(668, 412, 'green', 36, '#c8c8c0', -90)}
    ${label(775, 412, 'blue', 36, '#c8c8c0', -90)}
    ${label(908, 396, 'D3', 40, SILK, -90)}
    ${label(895, 190, 'D2', 38, SILK, -90)}
    ${label(910, 158, 'D5', 40, '#b36a5a', -45)}
  </g>
`;

@customElement('pcb-canvas')
export class PcbCanvas extends LitElement {
  static override styles = css`
    :host { display: block; flex: 1; min-width: 0; background: #001023; overflow: hidden; position: relative; }
    svg { display: block; width: 100%; height: 100%; }
    text { font-family: "DejaVu Sans", sans-serif; }
  `;

  override render() {
    return html`
      <svg viewBox="61 90 1552 848">
        <defs>
          <pattern id="hatch" width="9" height="9" patternUnits="userSpaceOnUse" patternTransform="rotate(45)">
            <rect width="9" height="9" fill="#852a2e"/><rect width="3" height="9" fill="#9a2f30"/>
          </pattern>
        </defs>
        <path d=${GRID.minor} stroke="#33435a" stroke-width="1" fill="none"/>
        <path d=${GRID.row} stroke="#5c6a78" stroke-width="1" fill="none"/>
        <path d=${GRID.major} stroke="#aab2bc" stroke-width="2" fill="none"/>
        <path d="M224.5 90v29" stroke="#8a8f96" stroke-width="1"/>
        <path d="M197 90.5h55" stroke="#8a8f96" stroke-width="1"/>
        <g transform="translate(600 220) scale(.3333)">${board}</g>
      </svg>
    `;
  }
}

@customElement('app-root')
export class AppRoot extends LitElement {
  static override styles = [chromeStyles, css`
    :host { display: block; width: 1800px; height: 1029px; background: #000; padding: 25px 37px 50px; box-sizing: border-box; overflow: hidden;
      font: 8.9px "Liberation Sans", sans-serif; color: #3c3c3c; text-rendering: geometricPrecision; }
    .win { position: relative; width: 1726px; height: 954px; background: #ececec; border-radius: 8px 8px 6px 6px; display: flex; flex-direction: column; }
    .titlebar { height: 19px; flex: none; background: #f6f6f6; border-radius: 8px 8px 0 0; display: flex; align-items: center; justify-content: center; position: relative; font-weight: 700; font-size: 9px; color: #555; border-bottom: 1px solid #e0e0e0; box-sizing: border-box; }
    .lights { position: absolute; left: 6px; top: 6px; display: flex; gap: 5.5px; }
    .lights i { width: 8px; height: 8px; border-radius: 50%; background: #d8d8d8; }
    .bar1 { height: 24px; flex: none; display: flex; align-items: center; padding-left: 3px; background: #e9e9e9; }
    .bar1 .tool { width: 21.6px; height: 20px; }
    .sep { flex: none; display: block; background: #d6d6d6; }
    .bar1 .sep, .bar2 .sep { width: 1px; height: 16px; margin: 0 2.5px; }
    .bar2 { height: 22px; flex: none; display: flex; align-items: center; background: #e9e9e9; padding: 0 0 1px 5px; box-sizing: border-box; }
    .sel { height: 14px; background: #fff; border-radius: 4px; display: flex; align-items: center; justify-content: space-between; padding: 0 4px 0 5px; box-shadow: 0 .5px 1px rgba(0,0,0,.22); box-sizing: border-box; white-space: nowrap; flex: none; }
    .pen { width: 21px; height: 20px; margin: 0 0 0 2px; background: #dde8f2; display: flex; align-items: center; justify-content: center; flex: none; }
    .pen svg { width: 15px; height: 15px; }
    .combo { width: 102px; height: 15px; margin-left: 1px; background: #fff; border: 1px solid #c4c4c4; box-sizing: border-box; display: flex; align-items: center; padding-left: 2px; gap: 4px; flex: none; }
    .combo i { width: 9px; height: 10px; background: #c83434; border: 1px solid #888; box-sizing: border-box; }
    .drop { width: 13px; height: 14px; margin: 0 6px 0 2px; background: #fff; border-radius: 4px; display: flex; align-items: center; justify-content: center; flex: none; box-shadow: 0 .5px 1px rgba(0,0,0,.22); }
    .drop svg { width: 7px; height: 5px; }
    .stack { width: 16px; height: 16px; flex: none; margin-right: 6px; display: block; }
    .main { flex: 1; display: flex; min-height: 0; position: relative; }
    .left { width: 24px; flex: none; display: flex; flex-direction: column; align-items: center; padding-top: 3px; background: #ececec; box-sizing: border-box; }
    .left .tool, .right .tool { width: 20px; height: 21.7px; }
    .left .tool svg, .right .tool svg { width: 17px; height: 17px; }
    .left .sep, .right .sep { width: 18px; height: 1px; margin: 2.4px 0; }
    .right { width: 28px; flex: none; display: flex; flex-direction: column; align-items: center; padding: 3px 4px 0 0; background: #ececec; box-sizing: border-box; }
    .msg { height: 22px; flex: none; display: flex; font-size: 8px; color: #a6a6a6; padding-left: 8px; align-items: center; }
    .msg div { display: flex; flex-direction: column; gap: 2px; }
    .status { height: 19px; flex: none; position: relative; display: flex; align-items: center; font-size: 8px; color: #a6a6a6; border-top: 1px solid #d8d8d8; background: linear-gradient(#ececec, #d9d9d9); border-radius: 0 0 6px 6px; box-sizing: border-box; padding-left: 1053px; }
    .status span { flex: none; white-space: nowrap; }
  `];

  override render() {
    const msgs: [string, string, number][] = [['Pads', '56', 37], ['Vias', '0', 37], ['Track Segments', '108', 77], ['Nets', '25', 37], ['Unrouted', '3', 50]];
    const stats: [string, number][] = [['Z 4.96', 48], ['X 92.4000  Y 15.2000', 105], ['dx 92.4000  dy 15.2000  dist 93.6419', 169], ['grid 0.2000', 122], ['mm', 30]];
    return html`
      <div class="win">
        <div class="titlebar">
          <div class="lights"><i></i><i></i><i></i></div>
          my_first_kicad_project — PCB Editor
        </div>
        <div class="bar1">${toolStrip(TOP)}</div>
        <div class="bar2">
          <span class="sel" style="width:123px">Track: use netclass width ${updown}</span>
          <span class="pen"><svg viewBox="0 0 16 16"><path d="M2.5 1v9a4 4 0 0 0 4 4h3a4 4 0 0 0 4-4V1" fill="none" stroke="#4a6f92" stroke-width="1.4"/><path d="M6 5h4M6 8h4" stroke="#4a6f92"/><circle cx="8" cy="14" r="1.7" fill="#2f7fc1"/></svg></span>
          <i class="sep" style="margin:0 3px"></i>
          <span class="sel" style="width:120px">Via: use netclass sizes ${updown}</span>
          <i class="sep" style="margin:0 3px"></i>
          <span class="combo"><i></i>F.Cu (PgUp)</span>
          <span class="drop"><svg viewBox="0 0 7 5"><path d="M1 1l2.5 3L6 1" fill="none" stroke="#444" stroke-width="1.2"/></svg></span>
          <svg class="stack" viewBox="0 0 16 16">${ICONS.layers}</svg>
          <i class="sep" style="margin:0 3px 0 0"></i>
          <span class="sel" style="width:134px">0.2000 mm (7.87 mils) ${updown}</span>
          <i class="sep" style="margin:0 3px"></i>
          <span class="sel" style="width:76px">Zoom 5.00 ${updown}</span>
        </div>
        <div class="main">
          <div class="left">${toolStrip(LEFT)}</div>
          <pcb-canvas></pcb-canvas>
          <div class="right">${toolStrip(RIGHT)}</div>
          <appearance-panel></appearance-panel>
        </div>
        <div class="msg">
          ${msgs.map(([k, v, w]) => html`<div style="width:${w}px"><span>${k}</span><span>${v}</span></div>`)}
        </div>
        <div class="status">
          ${stats.map(([t, w]) => html`<span style="width:${w}px">${t}</span>`)}
        </div>
        <board-setup></board-setup>
      </div>
    `;
  }
}
